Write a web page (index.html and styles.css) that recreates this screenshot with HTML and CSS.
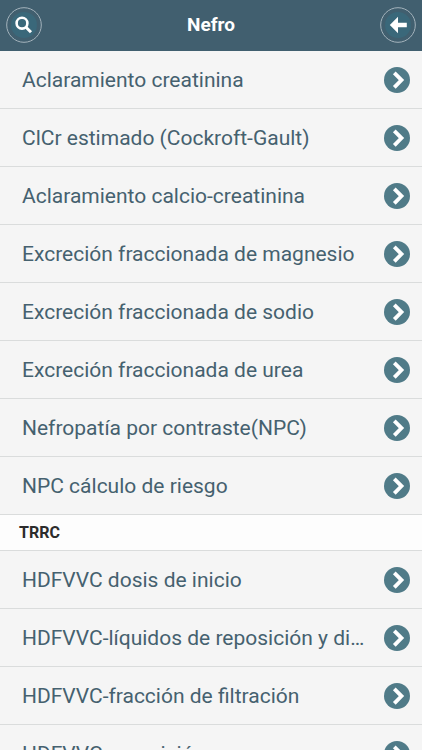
FILE: index.html
```html
<!DOCTYPE html>
<html lang="es">
<head>
<meta charset="utf-8">
<meta name="viewport" content="width=device-width, initial-scale=1">
<title>Nefro</title>
<link rel="stylesheet" href="styles.css">
</head>
<body>
<svg class="sprite" aria-hidden="true">
  <symbol id="chevron" viewBox="0 0 26 26">
    <circle cx="13" cy="13" r="13" fill="#507b88"/>
    <path d="M10.3 5.8 17.5 13.1 10.3 20.4" fill="none" stroke="#fff" stroke-width="3.8"/>
  </symbol>
</svg>
<header class="bar">
  <button class="round" type="button" aria-label="Buscar">
    <svg viewBox="0 0 36 36"><circle cx="18" cy="18" r="17.3" fill="none" stroke="#a4b3bc"/><circle cx="18" cy="18" r="13" fill="#3a687a"/><circle cx="16" cy="16.2" r="5.4" fill="none" stroke="#fff" stroke-width="2.6"/><path d="M19.8 20 25 25.2" stroke="#fff" stroke-width="3"/></svg>
  </button>
  <h1 class="title">Nefro</h1>
  <button class="round" type="button" aria-label="Volver">
    <svg viewBox="0 0 36 36"><circle cx="18" cy="18" r="17.3" fill="none" stroke="#a4b3bc"/><circle cx="18" cy="18" r="13" fill="#3a687a"/><path d="M9.8 18 18 9.8V15.8H26.8V20.2H18V26.2Z" fill="#fff"/></svg>
  </button>
</header>
<main>
  <ul class="list">
    <li><a class="row" href="#"><span class="label">Aclaramiento creatinina</span><svg class="go"><use href="#chevron"/></svg></a></li>
    <li><a class="row" href="#"><span class="label">ClCr estimado (Cockroft-Gault)</span><svg class="go"><use href="#chevron"/></svg></a></li>
    <li><a class="row" href="#"><span class="label">Aclaramiento calcio-creatinina</span><svg class="go"><use href="#chevron"/></svg></a></li>
    <li><a class="row" href="#"><span class="label">Excreción fraccionada de magnesio</span><svg class="go"><use href="#chevron"/></svg></a></li>
    <li><a class="row" href="#"><span class="label">Excreción fraccionada de sodio</span><svg class="go"><use href="#chevron"/></svg></a></li>
    <li><a class="row" href="#"><span class="label">Excreción fraccionada de urea</span><svg class="go"><use href="#chevron"/></svg></a></li>
    <li><a class="row" href="#"><span class="label">Nefropatía por contraste(NPC)</span><svg class="go"><use href="#chevron"/></svg></a></li>
    <li><a class="row" href="#"><span class="label">NPC cálculo de riesgo</span><svg class="go"><use href="#chevron"/></svg></a></li>
  </ul>
  <h2 class="divider">TRRC</h2>
  <ul class="list">
    <li><a class="row" href="#"><span class="label">HDFVVC dosis de inicio</span><svg class="go"><use href="#chevron"/></svg></a></li>
    <li><a class="row" href="#"><span class="label">HDFVVC-líquidos de reposición y di…</span><svg class="go"><use href="#chevron"/></svg></a></li>
    <li><a class="row" href="#"><span class="label">HDFVVC-fracción de filtración</span><svg class="go"><use href="#chevron"/></svg></a></li>
    <li><a class="row" href="#"><span class="label">HDFVVC reposición</span><svg class="go"><use href="#chevron"/></svg></a></li>
  </ul>
</main>
</body>
</html>
```
FILE: styles.css
```css
* { box-sizing: border-box; }
html { scrollbar-width: none; }
body {
  margin: 0;
  background: #f5f5f5;
  color: #45616f;
  font-family: Roboto, "Liberation Sans", sans-serif;
}
.sprite { display: none; }
.bar {
  display: flex;
  align-items: center;
  justify-content: space-between;
  padding: 7px 6px 8px;
  background: #415f6f;
}
.round {
  display: block;
  width: 36px;
  height: 36px;
  padding: 0;
  border: 0;
  border-radius: 50%;
  background: none;
}
.round svg { display: block; }
.title {
  margin: 0;
  color: #fff;
  font-size: 19px;
  line-height: 24px;
  font-weight: 700;
}
.list {
  margin: 0;
  padding: 0;
  list-style: none;
}
.row {
  display: flex;
  align-items: center;
  gap: 16px;
  height: 58px;
  padding: 0 12px 0 22px;
  border-bottom: 1px solid #dadcdc;
  color: inherit;
  text-decoration: none;
}
.label {
  flex: 1;
  min-width: 0;
  overflow: hidden;
  font-size: 21px;
  line-height: 28px;
  white-space: nowrap;
  text-overflow: ellipsis;
}
.go {
  flex: none;
  width: 26px;
  height: 26px;
}
.divider {
  margin: 0;
  padding: 6px 19px 5px;
  border-bottom: 1px solid #dadcdc;
  background: #fdfdfd;
  color: #2c2c2c;
  font-size: 16px;
  line-height: 24px;
  font-weight: 700;
}
```
